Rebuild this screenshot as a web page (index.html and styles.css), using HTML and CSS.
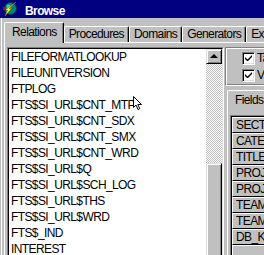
FILE: index.html
```html
<!DOCTYPE html>
<html lang="en">
<head>
    <meta charset="UTF-8">
    <title>Browse</title>
    <link rel="stylesheet" href="styles.css">
</head>
<body>
    <div class="window">
        <div class="titlebar">
            <svg class="app-icon" width="16" height="16" viewBox="0 0 16 16">
                <circle cx="8.5" cy="7.5" r="6" fill="#008080" stroke="#003c3c" stroke-width="1"/>
                <circle cx="6.5" cy="5.5" r="2" fill="#40c0c0"/>
                <path d="M14 1 L7 7.5 L9.5 7.5 L3 15 L5.5 9 L3 9 Z" fill="#ffff00" stroke="#806000" stroke-width="0.5"/>
                <rect x="1" y="6" width="3" height="3" fill="#d00000"/>
            </svg>
            <span class="caption">Browse</span>
        </div>

        <div class="client">
            <div class="tabs">
                <div class="tab active">Relations</div>
                <div class="tab">Procedures</div>
                <div class="tab">Domains</div>
                <div class="tab">Generators</div>
                <div class="tab">Exceptions</div>
            </div>

            <div class="page">
                <div class="listbox">
                    <div class="listbox-inner">
                        <ul class="items">
                            <li>FILEFORMATLOOKUP</li>
                            <li>FILEUNITVERSION</li>
                            <li>FTPLOG</li>
                            <li>FTS$SI_URL$CNT_MTP</li>
                            <li>FTS$SI_URL$CNT_SDX</li>
                            <li>FTS$SI_URL$CNT_SMX</li>
                            <li>FTS$SI_URL$CNT_WRD</li>
                            <li>FTS$SI_URL$Q</li>
                            <li>FTS$SI_URL$SCH_LOG</li>
                            <li>FTS$SI_URL$THS</li>
                            <li>FTS$SI_URL$WRD</li>
                            <li>FTS$_IND</li>
                            <li>INTEREST</li>
                        </ul>
                        <div class="vscroll">
                            <div class="sbtn"><span class="arrow-up"></span></div>
                            <div class="track"></div>
                            <div class="thumb"></div>
                        </div>
                    </div>
                </div>

                <div class="side">
                    <div class="group">
                        <div class="check-row">
                            <span class="checkbox"><svg width="7" height="7" viewBox="0 0 7 7"><path d="M0 2 L0 4 L2 6 L3 6 L7 2 L7 0 L2.5 4.5 Z" fill="#000"/></svg></span>
                            <span class="check-label">Tables</span>
                        </div>
                        <div class="check-row">
                            <span class="checkbox"><svg width="7" height="7" viewBox="0 0 7 7"><path d="M0 2 L0 4 L2 6 L3 6 L7 2 L7 0 L2.5 4.5 Z" fill="#000"/></svg></span>
                            <span class="check-label">Views</span>
                        </div>
                    </div>

                    <div class="ftabs">
                        <div class="tab active">Fields</div>
                    </div>
                    <div class="fpage">
                        <div class="grid">
                            <div class="cell">SECTION</div>
                            <div class="cell">CATEGORY</div>
                            <div class="cell">TITLE</div>
                            <div class="cell">PROJECT</div>
                            <div class="cell">PROJECT_ID</div>
                            <div class="cell">TEAM</div>
                            <div class="cell">TEAM_ID</div>
                            <div class="cell">DB_KEY</div>
                            <div class="cell"></div>
                        </div>
                    </div>
                </div>
            </div>
        </div>

        <svg class="cursor" width="10" height="14" viewBox="0 0 10 14">
            <path d="M0.5 0.5 L0.5 11.5 L3 9 L5 13.5 L6.8 12.7 L4.8 8.5 L8.5 8.5 Z" fill="#fff" stroke="#000" stroke-width="1" stroke-linejoin="miter"/>
        </svg>
    </div>
</body>
</html>
```

FILE: styles.css
```css
body {
    margin: 0;
    font-family: "Liberation Sans", Arial, sans-serif;
    font-size: 12px;
    letter-spacing: -0.6px;
    color: #000;
    background-color: #c0c0c0;
}
.window {
    position: relative;
    width: 264px;
    height: 255px;
    overflow: hidden;
    background-color: #c0c0c0;
}
.titlebar {
    height: 18px;
    display: flex;
    align-items: flex-start;
    background-color: #000080;
    color: #fff;
    font-weight: bold;
}
.app-icon {
    margin: 1px 0 0 2px;
}
.caption {
    margin-left: 7px;
    padding-top: 4px;
    line-height: 14px;
}
.client {
    margin-left: 1px;
    border-left: 1px solid #fff;
}

/* tab strip */
.tabs {
    display: flex;
    align-items: flex-end;
    height: 24px;
    padding-left: 2px;
    white-space: nowrap;
}
.tab {
    flex-shrink: 0;
    height: 15px;
    line-height: 15px;
    padding: 0 4px;
    border: 1px solid #fff;
    border-right-color: #000;
    border-bottom: none;
    border-radius: 2px 2px 0 0;
    box-shadow: inset -1px 0 #808080;
    background-color: #c0c0c0;
}
.tab.active {
    position: relative;
    z-index: 1;
    height: 16px;
    line-height: 16px;
    padding: 1px 6px 3px 7px;
    margin-bottom: -1px;
}
.page {
    display: flex;
    align-items: flex-start;
    height: 220px;
    overflow: hidden;
    margin-left: 2px;
    padding: 4px 0 0 2px;
    border-top: 1px solid #fff;
    border-left: 1px solid #fff;
}

/* list with scrollbar */
.listbox {
    flex-shrink: 0;
    width: 215px;
    border: 1px solid;
    border-color: #808080 #fff #fff #808080;
}
.listbox-inner {
    display: flex;
    height: 220px;
    border: 1px solid;
    border-color: #000 #dfdfdf #dfdfdf #000;
    background-color: #fff;
}
.items {
    flex: 1;
    margin: 0;
    padding: 0 0 0 2px;
    list-style: none;
    overflow: hidden;
    white-space: nowrap;
}
.items li {
    height: 16px;
    line-height: 16px;
}
.vscroll {
    width: 16px;
    display: flex;
    flex-direction: column;
}
.sbtn,
.thumb {
    border: 1px solid;
    border-color: #dfdfdf #000 #000 #dfdfdf;
    box-shadow: inset 1px 1px #fff, inset -1px -1px #808080;
    background-color: #c0c0c0;
}
.sbtn {
    height: 13px;
    display: flex;
    align-items: center;
    justify-content: center;
}
.arrow-up {
    width: 0;
    height: 0;
    border-left: 4px solid transparent;
    border-right: 4px solid transparent;
    border-bottom: 4px solid #000;
    margin-top: -1px;
}
.track {
    height: 99px;
    background-image: conic-gradient(#fff 25%, #c0c0c0 0 50%, #fff 0 75%, #c0c0c0 0);
    background-size: 2px 2px;
}
.thumb {
    flex: 1;
}

/* right panel */
.side {
    flex-shrink: 0;
    width: 80px;
    margin-left: 1px;
    white-space: nowrap;
}
.group {
    height: 33px;
    padding: 4px 0 0 16px;
    border: 1px solid;
    border-color: #808080 #fff #fff #808080;
    box-shadow: inset 1px 1px #fff, inset -1px -1px #808080;
}
.check-row {
    display: flex;
    align-items: flex-start;
    height: 17px;
}
.checkbox {
    width: 11px;
    height: 11px;
    display: flex;
    align-items: center;
    justify-content: center;
    border: 1px solid;
    border-color: #808080 #fff #fff #808080;
    box-shadow: inset 1px 1px #000, inset -1px -1px #dfdfdf;
    background-color: #fff;
}
.check-label {
    margin-left: 2px;
    line-height: 13px;
}
.ftabs {
    display: flex;
    margin-top: 4px;
    padding-left: 2px;
}
.fpage {
    height: 150px;
    margin-left: 2px;
    padding: 4px 0 0 2px;
    border-top: 1px solid #fff;
    border-left: 1px solid #fff;
}
.grid {
    border: 1px solid;
    border-color: #808080 transparent transparent #808080;
    box-shadow: inset 1px 1px #000;
    padding: 1px 0 0 1px;
}
.cell {
    height: 14px;
    line-height: 14px;
    padding-left: 3px;
    border-top: 1px solid #fff;
    border-left: 1px solid #fff;
    border-bottom: 1px solid #000;
    background-color: #c0c0c0;
}

.cursor {
    position: absolute;
    left: 133px;
    top: 96px;
}
```
